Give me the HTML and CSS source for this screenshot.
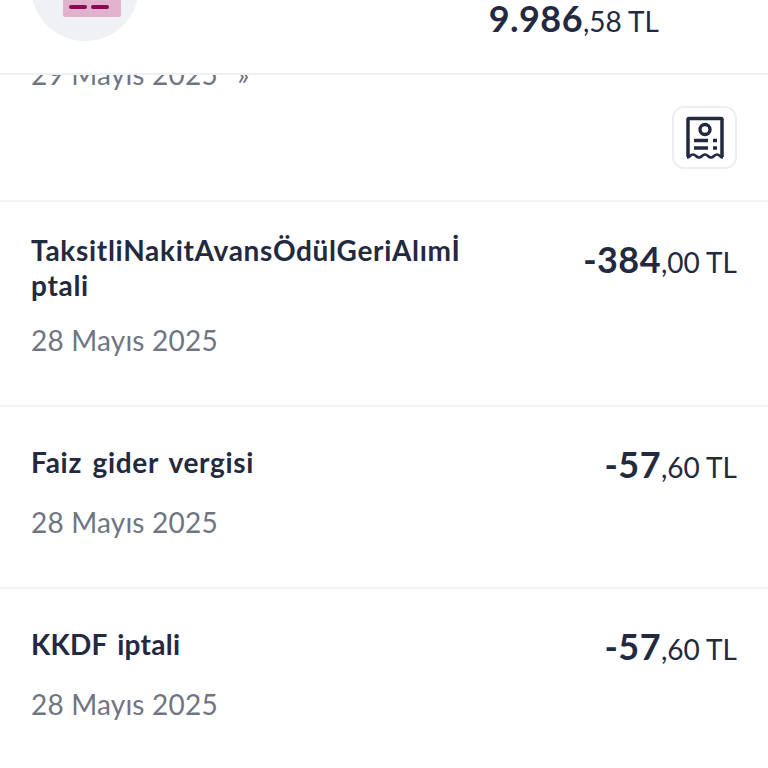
FILE: index.html
```html
<!DOCTYPE html>
<html>
<head>
    <title>Hesap Hareketleri</title>
    <link rel="stylesheet" href="styles.css">
</head>
<body>
    <div class="header">
        <div class="circle">
            <div class="card">
                <span class="dash"></span>
                <span class="dash"></span>
            </div>
        </div>
        <div class="amount header-amount"><b>9.986</b>,58 TL</div>
    </div>
    <div class="list">
        <div class="row row-first">
            <div class="date date-clipped">29 Mayıs 2025 <span class="arrows">»</span></div>
            <div class="receipt">
                <svg width="40" height="44" viewBox="0 0 40 44" fill="none" stroke="#232a40">
                    <path d="M3 41V3.500a1 1 0 0 1 1-1h32a1 1 0 0 1 1 1V41" stroke-width="3.500"/>
                    <path d="M2 41.500c3 0 3-3 6-3s3 3 6 3 3-3 6-3 3 3 6 3 3-3 6-3 3 3 6 3" stroke-width="2.600"/>
                    <circle cx="20" cy="13.500" r="5" stroke-width="3.400"/>
                    <path d="M9 24.500h14M28 24.500h4M9 32h14M28 32h4" stroke-width="3.400"/>
                </svg>
            </div>
        </div>
        <div class="row row-long">
            <div class="info">
                <div class="title">TaksitliNakitAvansÖdülGeriAlımİ<br>ptali</div>
                <div class="date">28 Mayıs 2025</div>
            </div>
            <div class="amount"><b>-384</b>,00 TL</div>
        </div>
        <div class="row">
            <div class="info">
                <div class="title">Faiz gider vergisi</div>
                <div class="date">28 Mayıs 2025</div>
            </div>
            <div class="amount"><b>-57</b>,60 TL</div>
        </div>
        <div class="row row-last">
            <div class="info">
                <div class="title">KKDF iptali</div>
                <div class="date">28 Mayıs 2025</div>
            </div>
            <div class="amount"><b>-57</b>,60 TL</div>
        </div>
    </div>
</body>
</html>
```
FILE: styles.css
```css
html, body {
    margin: 0;
    height: 768px;
    overflow: hidden;
    background-color: #fff;
    font-family: Lato, "Noto Sans", sans-serif;
    color: #232a40;
}
.header {
    height: 73px;
    padding: 0 31px;
    display: flex;
    justify-content: space-between;
    overflow: hidden;
    border-bottom: 2px solid #eff0f3;
}
.circle {
    width: 108px;
    height: 108px;
    margin-top: -67px;
    border-radius: 50%;
    background-color: #eff1f5;
    display: flex;
    justify-content: center;
    align-items: flex-end;
    padding-bottom: 24px;
    box-sizing: border-box;
}
.card {
    width: 58px;
    height: 40px;
    margin-left: 14px;
    background-color: #e0b2cb;
    border-radius: 2px;
    box-sizing: border-box;
    padding: 0 6px 8px;
    display: flex;
    align-items: flex-end;
    gap: 4px;
}
.dash {
    width: 18px;
    height: 4px;
    border-radius: 2px;
    background-color: #8a0a58;
}
.amount {
    font-size: 28px;
    line-height: 36px;
    white-space: nowrap;
}
.amount b {
    font-size: 36px;
    font-weight: 700;
    letter-spacing: 0.4px;
}
.header-amount {
    margin-right: 78px;
}
.row {
    display: flex;
    justify-content: space-between;
    padding: 0 31px;
    height: 180px;
    border-bottom: 2px solid #f2f3f5;
}
.row-first {
    height: 125px;
    overflow: hidden;
}
.row-long {
    height: 203px;
}
.row-last {
    border-bottom: none;
}
.title {
    font-size: 28px;
    font-weight: 700;
    line-height: 36px;
    padding-top: 37px;
    letter-spacing: 0.7px;
    word-spacing: 3px;
}
.row-long .title {
    padding-top: 31px;
    line-height: 35px;
}
.row-last .title {
    letter-spacing: 0.3px;
}
.date {
    font-size: 28px;
    line-height: 36px;
    margin-top: 24px;
    letter-spacing: 0.2px;
    word-spacing: 0;
    color: #6f7582;
}
.row-long .date {
    margin-top: 19px;
}
.date-clipped {
    margin-top: -19px;
}
.arrows {
    margin-left: 12px;
}
.row .amount {
    padding-top: 39px;
}
.row .amount b {
    line-height: 36px;
}
.receipt {
    width: 61px;
    height: 59px;
    margin-top: 31px;
    border: 2px solid #eceef2;
    border-radius: 12px;
    display: flex;
    align-items: center;
    justify-content: center;
}
```
